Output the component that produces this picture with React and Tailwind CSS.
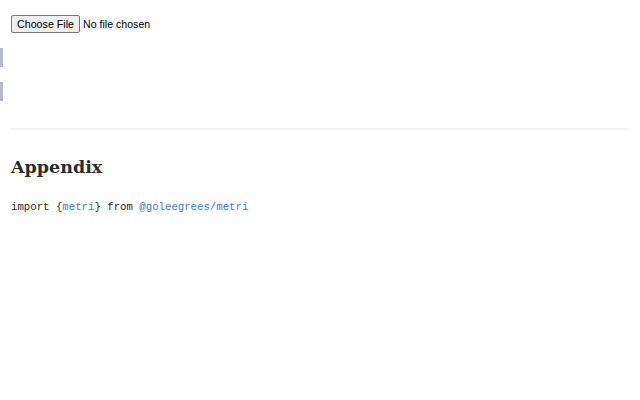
import React from 'react';

function Marker() {
  return <div className="h-[19px] w-[3px] bg-[#b5b8c8]"></div>;
}

export default function App() {
  return (
    <div className="min-h-[400px] bg-white">
      <div className="px-[11px] pt-[15px]">
        <input
          type="file"
          className="block h-[18px] text-[10.6px] leading-[18px] text-black font-['Liberation_Sans',sans-serif] file:mr-[3px] file:h-[18px] file:rounded-[2px] file:border file:border-solid file:border-[#767676] file:bg-[#efefef] file:px-[5px] file:text-[10.7px] file:leading-[16px] file:text-black"
        />
      </div>

      {/* empty cells */}
      <div className="mt-[15px] flex flex-col gap-[15px]">
        <Marker />
        <Marker />
      </div>

      <div className="px-[11px]">
        <div className="mt-[27px] h-[2px] w-[617px] bg-[#f4f4f4]"></div>

        <h2 className="mt-[24px] text-[17.5px] leading-[26px] font-bold text-[#2b2b2b] font-['DejaVu_Serif',serif]">
          Appendix
        </h2>

        <pre className="mt-[19px] text-[10.7px] leading-[16px] text-[#2b2b2b] font-['Liberation_Mono',monospace]">
          import {'{'}<span className="text-[#3b7fc4]">metri</span>{'}'} from <span className="text-[#3b7fc4]">@goleegrees/metri</span>
        </pre>
      </div>
    </div>
  );
}
